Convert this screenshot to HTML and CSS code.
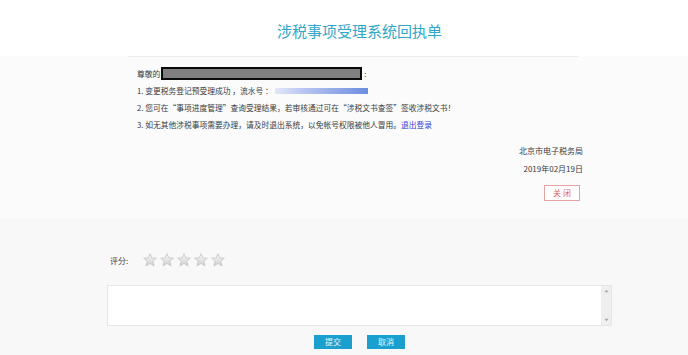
FILE: index.html
```html
<!DOCTYPE html>
<html lang="zh-CN">
<head>
<meta charset="utf-8">
<title>涉税事项受理系统回执单</title>
<link rel="stylesheet" href="styles.css">
</head>
<body>
<div class="upper">
  <header class="header"><h1 class="title">涉税事项受理系统回执单</h1></header>
  <div class="rule"></div>
  <div class="receipt">
    <p class="line">尊敬的<span class="mask"></span>:</p>
    <p class="line">1. 变更税务登记预受理成功 ，流水号 ：<span class="serial"></span></p>
    <p class="line">2. 您可在“事项进度管理”查询受理结果，若审核通过可在“涉税文书查签”签收涉税文书！</p>
    <p class="line">3. 如无其他涉税事项需要办理，请及时退出系统，以免帐号权限被他人冒用。<a class="link" href="#">退出登录</a></p>
    <div class="sign">
      <p class="line">北京市电子税务局</p>
      <p class="line">2019年02月19日</p>
      <button class="close">关 闭</button>
    </div>
  </div>
</div>
<div class="lower">
  <div class="rating">
    <span class="rating-label">评分:</span>
    <div class="stars">
      <svg class="star" viewBox="0 0 20 20"><defs><linearGradient id="sg" x1="0" y1="0" x2="0" y2="1"><stop offset="0" stop-color="#fafafa"/><stop offset="1" stop-color="#cfcfcf"/></linearGradient></defs><polygon points="10,1 12.6,7 19,7.4 14.1,11.6 15.7,18.5 10,14.8 4.3,18.5 5.9,11.6 1,7.4 7.4,7" fill="url(#sg)" stroke="#bdbdbd" stroke-width="1"/></svg>
      <svg class="star" viewBox="0 0 20 20"><polygon points="10,1 12.6,7 19,7.4 14.1,11.6 15.7,18.5 10,14.8 4.3,18.5 5.9,11.6 1,7.4 7.4,7" fill="url(#sg)" stroke="#bdbdbd" stroke-width="1"/></svg>
      <svg class="star" viewBox="0 0 20 20"><polygon points="10,1 12.6,7 19,7.4 14.1,11.6 15.7,18.5 10,14.8 4.3,18.5 5.9,11.6 1,7.4 7.4,7" fill="url(#sg)" stroke="#bdbdbd" stroke-width="1"/></svg>
      <svg class="star" viewBox="0 0 20 20"><polygon points="10,1 12.6,7 19,7.4 14.1,11.6 15.7,18.5 10,14.8 4.3,18.5 5.9,11.6 1,7.4 7.4,7" fill="url(#sg)" stroke="#bdbdbd" stroke-width="1"/></svg>
      <svg class="star" viewBox="0 0 20 20"><polygon points="10,1 12.6,7 19,7.4 14.1,11.6 15.7,18.5 10,14.8 4.3,18.5 5.9,11.6 1,7.4 7.4,7" fill="url(#sg)" stroke="#bdbdbd" stroke-width="1"/></svg>
    </div>
  </div>
  <div class="comment">
    <div class="comment-body"></div>
    <div class="scrollbar">
      <svg class="arrow" viewBox="0 0 6 4"><polygon points="3,0.5 5.5,3.5 0.5,3.5" fill="#a8a8a8"/></svg>
      <svg class="arrow" viewBox="0 0 6 4"><polygon points="0.5,0.5 5.5,0.5 3,3.5" fill="#a8a8a8"/></svg>
    </div>
  </div>
  <div class="actions">
    <button class="btn">提交</button>
    <button class="btn">取消</button>
  </div>
</div>
</body>
</html>
```

FILE: styles.css
```css
* { box-sizing: border-box; }
html, body {
  margin: 0;
  padding: 0;
}
body {
  width: 688px;
  height: 355px;
  overflow: hidden;
  font-family: "Noto Sans CJK SC", "Noto Sans", sans-serif;
  color: #3a3a3a;
  background: #f8f8f9;
}
.upper {
  height: 219px;
  background: linear-gradient(#ffffff 0, #ffffff 56px, #fbfbfb 57px, #fbfbfb 100%);
}
.header {
  height: 56px;
  display: flex;
  justify-content: center;
  align-items: center;
  padding: 6px 0 0 31px;
}
.title {
  margin: 0;
  font-size: 15px;
  font-weight: 400;
  line-height: 20px;
  color: #2ea7c9;
}
.rule {
  height: 1px;
  margin: 0 109px 0 128px;
  background: #ededed;
}
.receipt {
  width: 446px;
  margin-left: 137px;
  padding-top: 8px;
  font-size: 7.75px;
  text-spacing-trim: space-all;
}
.line {
  margin: 0;
  height: 17px;
  line-height: 17px;
  white-space: pre;
  display: flex;
  align-items: center;
}
.mask {
  display: inline-block;
  width: 201px;
  height: 13px;
  background: #808080;
  border: 2px solid #0b0b0b;
  margin: 0 2px 0 1px;
}
.serial {
  display: inline-block;
  width: 93px;
  height: 6px;
  margin-left: 2px;
  background: linear-gradient(90deg, #e3e8f9, #b9c6f0 30%, #6d8de0);
}
.link {
  color: #3a3ccf;
  text-decoration: none;
}
.sign {
  margin-top: 9px;
  display: flex;
  flex-direction: column;
  align-items: flex-end;
  font-size: 8px;
}
.sign .line { height: 18px; line-height: 18px; }
.close {
  margin: 7px 3px 0 0;
  width: 36px;
  height: 16px;
  padding: 0;
  border: 1px solid #e6a3a3;
  background: #fff;
  color: #d9605e;
  font-family: inherit;
  font-size: 8px;
  line-height: 14px;
}
.lower {
  padding-top: 33px;
}
.rating {
  display: flex;
  align-items: center;
  height: 16px;
  margin-left: 110px;
}
.rating-label {
  font-family: "Noto Sans CJK SC", serif;
  font-size: 8px;
  color: #444;
  width: 33px;
}
.stars {
  display: flex;
  gap: 3px;
}
.star {
  width: 14px;
  height: 14px;
  display: block;
}
.comment {
  margin: 17px 0 0 107px;
  width: 505px;
  height: 41px;
  display: flex;
  border: 1px solid #e6e6e6;
  background: #fff;
}
.comment-body {
  flex: 1;
}
.scrollbar {
  width: 10px;
  background: #efefef;
  display: flex;
  flex-direction: column;
  justify-content: space-between;
  align-items: center;
  padding: 3px 0;
}
.arrow {
  width: 5px;
  height: 4px;
  display: block;
}
.actions {
  display: flex;
  gap: 15px;
  margin: 9px 0 0 314px;
}
.btn {
  width: 38px;
  height: 14px;
  padding: 0;
  border: 0;
  background: #1b9fcf;
  color: #e8f6fc;
  font-family: inherit;
  font-size: 8px;
  line-height: 14px;
}
```
